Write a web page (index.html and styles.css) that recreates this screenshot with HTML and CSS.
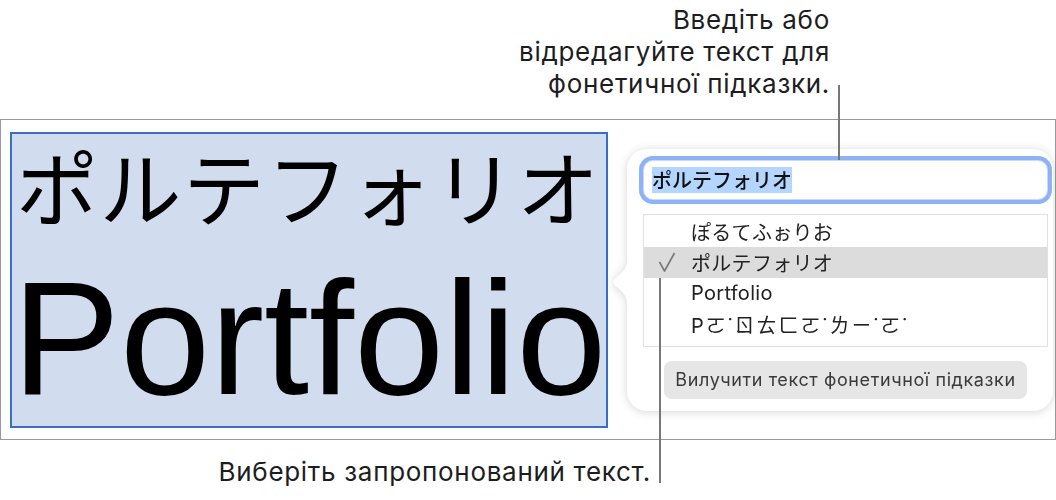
FILE: index.html
```html
<!DOCTYPE html>
<html lang="uk">
<head>
  <meta charset="UTF-8">
  <meta name="viewport" content="width=device-width, initial-scale=1.0">
  <title>Фонетична підказка</title>
  <link rel="stylesheet" href="styles.css">
</head>
<body>
  <div class="page">
    <p class="note note-top">Введіть або<br>відредагуйте текст для<br>фонетичної підказки.</p>

    <div class="frame">
      <div class="sample">
        <div class="sample-ruby">ポルテフォリオ</div>
        <div class="sample-word">Portfolio</div>
      </div>

      <div class="popover">
        <svg class="popover-arrow" width="15" height="56" viewBox="0 0 15 56">
          <path d="M15 0 C15 12 11 17 5 22 Q0 26 0 28 Q0 30 5 34 C11 39 15 44 15 56 Z" fill="#fff"/>
        </svg>
        <div class="field"><span class="field-sel">ポルテフォリオ</span></div>
        <ul class="choices">
          <li>ぽるてふぉりお</li>
          <li class="is-checked">
            <svg class="check" width="18" height="20" viewBox="0 0 18 20">
              <polyline points="1.5,10 6.5,19 16.5,1" fill="none" stroke="#7a7a7a" stroke-width="1.7" stroke-linejoin="round"/>
            </svg>ポルテフォリオ
          </li>
          <li>Portfolio</li>
          <li class="zhuyin">Pㄛ˙ㄖㄊㄈㄛ˙ㄌㄧ˙ㄛ˙</li>
        </ul>
        <button class="remove">Вилучити текст фонетичної підказки</button>
      </div>
    </div>

    <p class="note note-bottom">Виберіть запропонований текст.</p>

    <span class="leader leader-top"></span>
    <span class="leader leader-bottom"></span>
  </div>
</body>
</html>
```

FILE: styles.css
```css
body {
  margin: 0;
  background: #fff;
  font-family: Inter, "Noto Sans", "Noto Sans CJK JP", sans-serif;
  color: #1d1d1f;
}

.page {
  position: relative;
  width: 1056px;
  height: 500px;
}

.note {
  margin: 0;
  font-size: 26px;
  line-height: 32px;
  letter-spacing: 0.7px;
  text-align: right;
}

.note-top {
  height: 115px;
  padding: 4px 226px 0 0;
}

.note-bottom {
  margin-top: 16px;
  padding-right: 405px;
}

/* document frame with the selected text and the popover */
.frame {
  box-sizing: border-box;
  width: 1056px;
  height: 321px;
  border: 1px solid #9a9a9a;
  padding-left: 9px;
  display: flex;
  align-items: center;
  gap: 19px;
}

.sample {
  box-sizing: border-box;
  width: 598px;
  height: 296px;
  background: #d1dcee;
  border: 2px solid #3570c2;
  color: #000;
}

.sample-ruby {
  font-family: "Noto Sans CJK JP", sans-serif;
  font-size: 82px;
  line-height: 82px;
  letter-spacing: 1.5px;
  padding: 10px 0 0 4px;
  white-space: nowrap;
}

.sample-word {
  font-family: "Liberation Sans", Arial, sans-serif;
  font-size: 162px;
  line-height: 160px;
  margin-top: 32px;
  white-space: nowrap;
}

/* popover */
.popover {
  position: relative;
  box-sizing: border-box;
  width: 426px;
  height: 262px;
  padding: 11px 5px 12px 16px;
  background: #fff;
  border-radius: 20px;
  filter: drop-shadow(0 1px 5px rgba(0, 0, 0, 0.16));
  display: flex;
  flex-direction: column;
}

.popover-arrow {
  position: absolute;
  left: -14px;
  top: 105px;
}

.field {
  box-sizing: border-box;
  height: 40px;
  border-radius: 10px;
  border: 1px solid #c9d8f3;
  box-shadow: 0 0 0 4px #8db2f5;
  background: #fff;
  padding-left: 8px;
  display: flex;
  align-items: center;
  font-family: "Noto Sans CJK JP", sans-serif;
  font-size: 20px;
  font-weight: 500;
  color: #111;
}

.field-sel {
  background: #b4d5fe;
  line-height: 26px;
}

.choices {
  list-style: none;
  margin: 14px 0 0;
  padding: 1px 0 6px;
  border: 1px solid #e1e1e1;
  font-family: Inter, "Noto Sans CJK JP", "Noto Sans CJK TC", sans-serif;
  font-size: 20px;
  letter-spacing: 0.3px;
  color: #222;
}

.choices li {
  height: 31px;
  padding-left: 47px;
  display: flex;
  align-items: center;
  white-space: nowrap;
}

.choices li.is-checked {
  background: #dcdcdc;
}

.choices li.zhuyin {
  letter-spacing: 2px;
}

.check {
  margin-left: -33px;
  margin-right: 15px;
}

.remove {
  align-self: center;
  margin-top: 14px;
  height: 38px;
  padding: 0 11px;
  border: none;
  border-radius: 8px;
  background: #e6e6e6;
  font-family: Inter, sans-serif;
  font-size: 18px;
  letter-spacing: 0.6px;
  color: #3a3a3a;
}

/* callout leader lines */
.leader {
  position: absolute;
  width: 2px;
  background: #777;
}

.leader-top {
  left: 838px;
  top: 85px;
  height: 75px;
}

.leader-bottom {
  left: 659px;
  top: 278px;
  height: 205px;
}
```
